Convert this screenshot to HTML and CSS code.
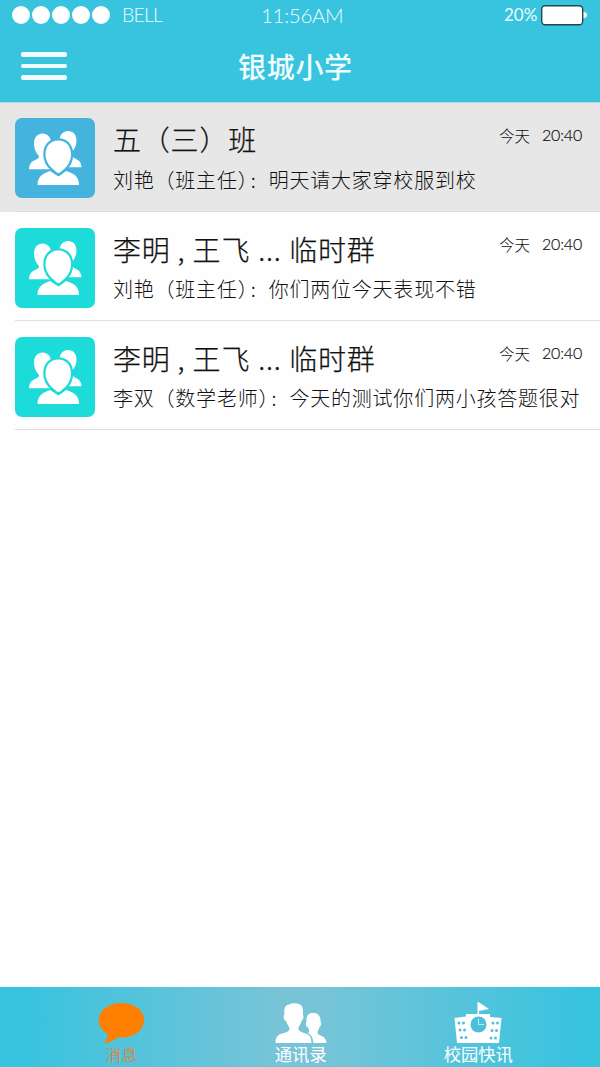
FILE: index.html
```html
<!DOCTYPE html>
<html lang="zh-CN">
<head>
<meta charset="utf-8">
<title>银城小学</title>
<link rel="stylesheet" href="styles.css">
</head>
<body>
<svg class="defs" width="0" height="0" aria-hidden="true">
  <symbol id="group" viewBox="0 0 80 80">
    <g class="group-shape">
      <path d="M27.5 15.5C32.500 15.500 36 19 36 25C36 31 32.500 35.500 31 39C31.500 41.500 35 42 37 51.300H14C14 46 17 43 21 41.500C23.500 40.500 24 39.500 24 38C21 35 19 31 19 25.500C19 19 23 15.500 27.500 15.500Z"/>
      <path d="M53 13C58.500 13 61.500 17 61.500 22.500C61.500 28 59 31 57.500 34C56.500 37 57.500 39.500 60 40.500C64 42 66.500 45 66.500 49.300H50L44.500 22C45 16.500 48 13 53 13Z"/>
      <path d="M35 53L43.500 58.500L51 53C57 55 64 57 64 67H22.500C22.500 57 30 55 35 53Z"/>
      <path class="outlined" d="M43.300 22.500C51 22.500 56 28 56 36.500C56 43 52.500 48.500 48.500 51.500C46.500 53 45.500 55 43.500 55C41.500 55 40.500 53 38.500 51.500C34.500 48.500 30.500 43 30.500 36.500C30.500 28 35.500 22.500 43.300 22.500Z"/>
    </g>
  </symbol>
</svg>
<div class="app">
  <header class="top">
    <div class="status">
      <div class="signal"><i></i><i></i><i></i><i></i><i></i></div>
      <span class="carrier">BELL</span>
      <span class="clock">11:56AM</span>
      <span class="percent">20%</span>
      <svg class="battery" width="48" height="22" viewBox="0 0 48 22"><path d="M43 7.500Q47 8 47 11Q47 14 43 14.500Z" fill="#effcff"/><rect x="1.700" y="1.700" width="41" height="19" rx="3.500" fill="#fff" stroke="#24474f" stroke-width="1.400"/></svg>
    </div>
    <div class="nav">
      <div class="menu"><i></i><i></i><i></i></div>
      <h1>银城小学</h1>
    </div>
  </header>
  <main class="list">
    <article class="row active">
      <svg class="avatar blue"><use href="#group"/></svg>
      <div class="body">
        <div class="line"><h2>五（三）班</h2><div class="time"><span>今天</span><span class="hour">20:40</span></div></div>
        <p>刘艳（班主任<span class="close">）</span><span class="colon">:</span>明天请大家穿校服到校</p>
      </div>
    </article>
    <article class="row">
      <svg class="avatar"><use href="#group"/></svg>
      <div class="body">
        <div class="line"><h2>李明<span class="comma">,</span>王飞<span class="dots">...</span>临时群</h2><div class="time"><span>今天</span><span class="hour">20:40</span></div></div>
        <p>刘艳（班主任<span class="close">）</span><span class="colon">:</span>你们两位今天表现不错</p>
      </div>
    </article>
    <article class="row">
      <svg class="avatar"><use href="#group"/></svg>
      <div class="body">
        <div class="line"><h2>李明<span class="comma">,</span>王飞<span class="dots">...</span>临时群</h2><div class="time"><span>今天</span><span class="hour">20:40</span></div></div>
        <p>李双（数学老师<span class="close">）</span><span class="colon">:</span>今天的测试你们两小孩答题很对</p>
      </div>
    </article>
  </main>
  <footer class="tabs">
    <div class="tab current">
      <svg width="48" height="42" viewBox="0 0 48 42"><path d="M24.500 1C37 1 47 8 47 18C47 28.500 37 35.500 24.500 35.500L20.500 35.200C17 38.500 12 41 7 41C9 39 11 35.500 10.500 32C5 29 1.700 24 1.700 18C1.700 8 12 1 24.500 1Z" fill="#ff7f00"/></svg>
      <span>消息</span>
    </div>
    <div class="tab">
      <svg width="52" height="42" viewBox="0 0 52 42"><g fill="#fff"><path d="M.5 41C.500 35 3 32.500 7 31.500C11 30.500 14 29.500 14.500 27.500C14.500 24 12 23 11 19C8 18 8.500 13 9.500 12C8.500 6 11 2.500 14.500 2.500C17 .500 25 .500 27 4.500C28.500 7.500 28 10 27.700 12C29 14 28.500 18 26.500 19C25.500 23 23.500 24 23.500 27C24 29.500 28 30.500 32 32C36 33.500 36 37 36.500 41Z"/><path d="M38 11C42.500 10.500 46 14 45.500 19.500C46.500 21.500 46 24 44.500 25C43.500 28 42.500 29 42.500 31C43 34 51.500 33.500 51.500 41H38.300C38 35.500 36.500 33 33 31C35 29.500 34.500 28 32.500 25C30.500 24 30.500 21 31.500 19.500C30.500 13.500 34.500 10.500 38 11Z"/></g></svg>
      <span>通讯录</span>
    </div>
    <div class="tab">
      <svg width="48" height="42" viewBox="0 0 48 42"><g fill="#fff"><path d="M23.500 0H24.500L35 7L25 9V12H36V15L47.500 16L45 41H3L.500 16L12 14.500V12H23.500Z"/></g><circle cx="24.500" cy="22.500" r="8" fill="#4cbfdb"/><path d="M24.500 16.500V22.500H30" fill="none" stroke="#b9ebf5" stroke-width="1"/><g fill="#53c0dc"><circle cx="5" cy="21" r="1.500"/><circle cx="9.500" cy="21" r="1.500"/><circle cx="6" cy="28" r="1.500"/><circle cx="10.500" cy="28" r="1.500"/><circle cx="7.500" cy="35.500" r="1.500"/><circle cx="12" cy="35.500" r="1.500"/><circle cx="39" cy="21" r="1.500"/><circle cx="43.500" cy="21" r="1.500"/><circle cx="38" cy="28.500" r="1.500"/><circle cx="42.500" cy="28.500" r="1.500"/><circle cx="37" cy="36" r="1.500"/><circle cx="41.500" cy="36" r="1.500"/></g></svg>
      <span>校园快讯</span>
    </div>
  </footer>
</div>
</body>
</html>
```
FILE: styles.css
```css
* { box-sizing: border-box; }
body { margin: 0; background: #fefefe; font-family: "Noto Sans CJK SC", sans-serif; font-weight: 300; color: #111; }
.defs { display: block; }
.app { display: flex; flex-direction: column; height: 1067px; width: 600px; overflow: hidden; }
.top { height: 103px; background: #38c3df; color: #f0fdff; border-bottom: 1px solid #a9dfe9; }
.status { display: flex; align-items: center; height: 30px; padding-left: 12px; font-family: Lato, sans-serif; line-height: 30px; }
.signal { display: flex; gap: 2px; width: 110px; }
.signal i { width: 18px; height: 18px; border-radius: 50%; background: #fff; }
.carrier { width: 139px; padding-bottom: 1px; font-size: 19.500px; letter-spacing: -.8px; }
.clock { width: 243px; font-size: 20.500px; letter-spacing: -.3px; }
.percent { width: 36px; font-size: 17px; font-weight: 400; }
.battery { flex: none; }
.nav { display: flex; align-items: center; height: 72px; padding-left: 21px; }
.menu { display: flex; flex-direction: column; gap: 7px; width: 217px; }
.menu i { width: 46px; height: 4.500px; border-radius: 2px; background: #effdff; }
h1 { margin: 0; font-size: 28px; font-weight: 500; letter-spacing: .7px; line-height: 72px; }
.list { flex: 1; }
.row { display: flex; gap: 18px; height: 109px; padding: 16px 0 0 15px; background: linear-gradient(#dedede, #dedede) 15px 100% / 100% 1px no-repeat; }
.row.active { padding-top: 15px; background-color: #e7e7e7; }
.avatar { flex: none; width: 80px; height: 80px; border-radius: 7px; background: #1ddbd9; color: #1ddbd9; }
.avatar.blue { background: #44b4de; color: #44b4de; }
.group-shape { fill: #fff; }
.outlined { stroke: currentColor; stroke-width: 4.500; paint-order: stroke; }
.body { flex: 1; min-width: 0; }
.line { display: flex; justify-content: space-between; height: 41px; padding-right: 18px; }
h2 { margin: 0; font-size: 28px; font-weight: 300; letter-spacing: .8px; line-height: 42px; white-space: nowrap; -webkit-text-stroke: .25px currentColor; }
h2 span, p span { display: inline-block; }
.comma { width: 22px; padding-left: 7px; }
.dots { width: 39px; padding-left: 8px; }
.time { display: flex; gap: 12px; font-size: 15.500px; line-height: 34px; }
.row:not(.active) .time { line-height: 32px; }
.hour { width: 40px; font-family: Lato, sans-serif; font-size: 16px; font-weight: 300; letter-spacing: -.2px; white-space: nowrap; -webkit-text-stroke: .2px currentColor; }
p { margin: 0; font-size: 20px; letter-spacing: .78px; line-height: 41px; white-space: nowrap; }
.row:not(.active) p { line-height: 39px; }
.close { width: 12px; font-feature-settings: "halt"; }
.colon { width: 19px; padding-left: 1px; }
.tabs { display: flex; height: 80px; padding: 15px 32px 0; background: linear-gradient(90deg, #38c3df 0 4%, #78c4d7 47% 53%, #38c3df 97%); color: #fff; }
.tab { flex: 0 0 178.500px; display: flex; flex-direction: column; align-items: center; font-size: 17.300px; font-weight: 400; line-height: 20px; }
.tab:nth-child(2) { padding-left: 2px; }
.tab span { white-space: nowrap; }
.current span { color: #d18c4c; font-size: 16px; }
```
